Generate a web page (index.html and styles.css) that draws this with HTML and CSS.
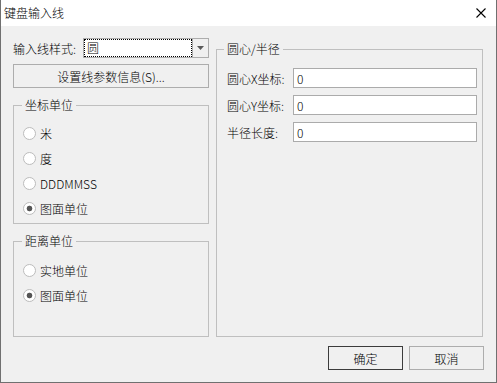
FILE: index.html
```html
<!DOCTYPE html>
<html lang="zh-CN">
<head>
  <meta charset="UTF-8">
  <title>键盘输入线</title>
  <link rel="stylesheet" href="styles.css">
</head>
<body>
  <div class="window">
    <div class="titlebar">
      <span class="title">键盘输入线</span>
      <svg class="close" width="10" height="10" viewBox="0 0 10 10">
        <path d="M0.5 0.5 L9.5 9.5 M9.5 0.5 L0.5 9.5" stroke="#000" stroke-width="1.1" fill="none"/>
      </svg>
    </div>

    <div class="content">
      <div class="main">
        <div class="left">
          <div class="style-row">
            <span class="style-label">输入线样式:</span>
            <div class="combo">
              <div class="combo-value">圆</div>
              <div class="combo-arrow">
                <svg width="7" height="4" viewBox="0 0 7 4"><polygon points="0,0 7,0 3.5,4" fill="#5a5a5a"/></svg>
              </div>
            </div>
          </div>

          <button type="button" class="btn btn-wide">设置线参数信息(S)...</button>

          <fieldset class="group group-coord">
            <legend>坐标单位</legend>
            <div class="radio-row"><span class="radio"></span>米</div>
            <div class="radio-row"><span class="radio"></span>度</div>
            <div class="radio-row"><span class="radio"></span>DDDMMSS</div>
            <div class="radio-row"><span class="radio checked"></span>图面单位</div>
          </fieldset>

          <fieldset class="group group-dist">
            <legend>距离单位</legend>
            <div class="radio-row"><span class="radio"></span>实地单位</div>
            <div class="radio-row"><span class="radio checked"></span>图面单位</div>
          </fieldset>
        </div>

        <fieldset class="group group-circle">
          <legend>圆心/半径</legend>
          <div class="field-row">
            <span class="field-label">圆心X坐标:</span>
            <input type="text" class="field" value="0">
          </div>
          <div class="field-row">
            <span class="field-label">圆心Y坐标:</span>
            <input type="text" class="field" value="0">
          </div>
          <div class="field-row">
            <span class="field-label">半径长度:</span>
            <input type="text" class="field" value="0">
          </div>
        </fieldset>
      </div>

      <div class="footer">
        <button type="button" class="btn btn-default">确定</button>
        <button type="button" class="btn">取消</button>
      </div>
    </div>
  </div>
</body>
</html>
```

FILE: styles.css
```css
* {
  box-sizing: border-box;
}

body {
  margin: 0;
  font-family: "Noto Sans CJK SC", "Microsoft YaHei", sans-serif;
  font-size: 12px;
  font-weight: 300;
  color: #000;
  background-color: #fff;
}

.window {
  width: 497px;
  height: 383px;
  display: flex;
  flex-direction: column;
  border: 1px solid #707070;
  border-top: none;
  background-color: #f0f0f0;
}

.titlebar {
  height: 26px;
  flex-shrink: 0;
  display: flex;
  align-items: center;
  justify-content: space-between;
  padding: 0 10px 1px 3px;
  background-color: #fff;
}

.title {
  line-height: 16px;
}

.content {
  flex: 1;
  display: flex;
  flex-direction: column;
  padding: 12px 13px 12px 12px;
}

.main {
  flex: 1;
  display: flex;
  gap: 7px;
}

.left {
  width: 196px;
  display: flex;
  flex-direction: column;
}

/* combo */
.style-row {
  display: flex;
  align-items: center;
  height: 20px;
}

.style-label {
  width: 70px;
}

.combo {
  flex: 1;
  height: 20px;
  display: flex;
  border: 1px solid #adadad;
  background-color: #fff;
}

.combo-value {
  flex: 1;
  border: 1px dotted #000;
  padding-left: 2px;
  line-height: 16px;
}

.combo-arrow {
  width: 16px;
  display: flex;
  align-items: center;
  justify-content: center;
  border-left: 1px solid #adadad;
  background-color: #f0f0f0;
}

/* buttons */
.btn {
  height: 24px;
  padding: 0;
  font-family: inherit;
  font-size: 12px;
  font-weight: 300;
  color: #000;
  background-color: #f0f0f0;
  border: 1px solid #adadad;
  border-radius: 0;
}

.btn-wide {
  margin-top: 6px;
  width: 100%;
}

.footer {
  display: flex;
  justify-content: flex-end;
  gap: 6px;
  margin-top: 9px;
  margin-right: -1px;
}

.footer .btn {
  width: 75px;
}

.btn-default {
  border-color: #3c3c3c;
}

/* group boxes */
.group {
  margin: 0;
  min-width: 0;
  border: 1px solid #bfbfbf;
}

.group legend {
  padding: 0 3px;
  line-height: 16px;
}

.group-coord {
  margin-top: 9px;
  padding: 10px 0 5px 9px;
}

.group-dist {
  flex: 1;
  margin-top: 9px;
  padding: 11px 0 5px 9px;
}

.group-coord legend,
.group-dist legend {
  margin-left: -1px;
}

.group-circle {
  flex: 1;
  margin-top: 3px;
  padding: 11px 5px 5px 10px;
}

.group-circle legend {
  margin-left: -3px;
}

.radio-row {
  display: flex;
  align-items: center;
  height: 20px;
  margin-bottom: 5px;
}

.radio-row:last-child {
  margin-bottom: 0;
}

.radio {
  width: 13px;
  height: 13px;
  margin-right: 4px;
  border: 1px solid #bcbcbc;
  border-radius: 50%;
  background-color: #fff;
}

.radio.checked {
  background: radial-gradient(circle, #555 0, #555 2.5px, #fff 3.2px);
}

.field-row {
  display: flex;
  align-items: center;
  height: 20px;
  margin-bottom: 7px;
}

.field-label {
  width: 66px;
}

.field {
  flex: 1;
  height: 20px;
  padding: 0 3px;
  font-family: inherit;
  font-size: 12px;
  font-weight: 300;
  color: #000;
  border: 1px solid #ababab;
  border-radius: 0;
  outline: none;
}
```
